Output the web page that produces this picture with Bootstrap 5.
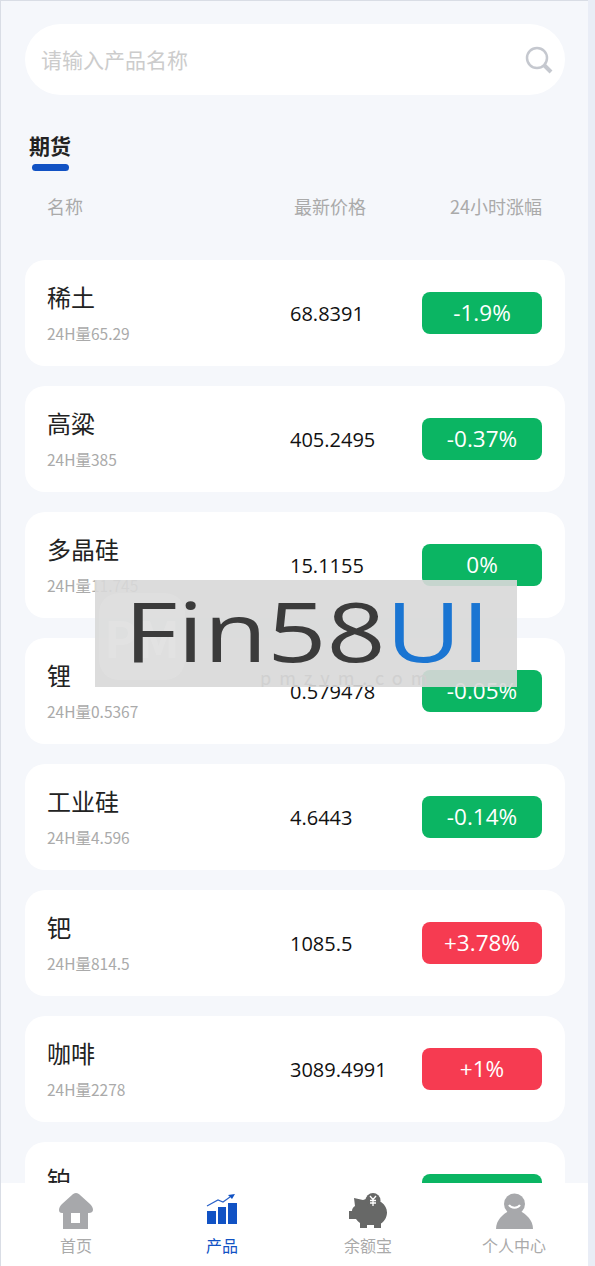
<!DOCTYPE html>
<html lang="zh">
<head>
  <meta charset="UTF-8">
  <meta name="viewport" content="width=device-width, initial-scale=1.0">
  <title>产品</title>
  <link href="https://cdn.jsdelivr.net/npm/bootstrap@5.3.0/dist/css/bootstrap.min.css" rel="stylesheet">
  <style>
    html, body { height: 1266px; overflow: hidden; }
    body { background: #e9edf6; font-family: "Noto Sans CJK SC", "Noto Sans", sans-serif; }
    .phone { width: 588px; height: 1266px; border-left: 1px solid #d9dde5; border-top: 1px solid #d9dde5; background: #f5f7fb; padding: 23px 23px 0 24px; overflow: hidden; }
    .search-box { height: 71px; border-radius: 36px; background: #fff; padding: 0 12px 0 16px; color: #ccc; font-size: 21px; }
    .tab-title { margin: 36px 0 0 4px; width: 42px; font-size: 21px; font-weight: 700; line-height: 28px; color: #222; }
    .tab-bar { width: 37px; height: 7px; margin: 5px 0 0 7px; border-radius: 4px; background: #1152c4; }
    .head-row { height: 42px; margin-top: 14px; padding: 0 23px 0 22px; color: #aaa; font-size: 18px; }
    .goods { height: 106px; margin-top: 20px; border-radius: 20px; background: #fff; padding: 0 23px 0 22px; }
    .head-row + .goods { margin-top: 33px; }
    .cell-name { width: 243px; padding-bottom: 4px; }
    .cell-price { flex: 1; padding-top: 2px; font-family: "Open Sans", "Liberation Sans", sans-serif; font-size: 20px; color: #111; }
    .goods-name { font-size: 24px; line-height: 36px; color: #222; }
    .goods-vol { min-height: 22px; font-size: 15.5px; line-height: 22px; color: #aaa; margin-top: 7px; }
    .change { width: 120px; height: 42px; line-height: 42px; border-radius: 8px; text-align: center; color: #fff; font-family: "Open Sans", sans-serif; font-size: 22.5px; }
    .fall { background: #0bb563; }
    .rise { background: #f63b51; }
    .tabbar { position: absolute; left: 1px; bottom: 0; width: 587px; height: 83px; background: #fff; padding: 10px 0 0 2px; }
    .tab-item { width: 146px; font-size: 16px; line-height: 22px; color: #aaa; }
    .tab-item svg { display: block; margin: 0 auto 5px; }
    .tab-on { color: #1152c4; }
    .stamp { position: absolute; left: 95px; top: 580px; width: 422px; height: 107px; background: rgba(216,216,216,.91); overflow: hidden; }
    .stamp-logo { position: absolute; left: 4px; top: 13px; width: 86px; height: 87px; border-radius: 20px; background: rgba(255,255,255,.1); color: rgba(255,255,255,.12); font-weight: 700; font-size: 50px; line-height: 87px; text-align: center; }
    .stamp-url { position: absolute; left: 165px; top: 85px; font-size: 18px; line-height: 24px; letter-spacing: 8px; color: #d0d0d0; }
    .stamp-word { position: absolute; left: 29px; top: -2px; font-family: "Open Sans", sans-serif; font-weight: 500; font-size: 82px; line-height: 105px; color: #3b3b3b; white-space: nowrap; transform: scaleX(1.264); transform-origin: left center; }
    .stamp-word b { font-weight: 500; color: #1a75d2; }
  </style>
</head>
<body>
  <div class="phone">
    <div class="search-box d-flex align-items-center justify-content-between">
      <span>请输入产品名称</span>
      <svg width="28" height="28" viewBox="0 0 28 28" fill="none" stroke="#c5c8cf" stroke-width="2.500"><circle cx="12" cy="12" r="10"/><path d="M19 19l7 7" stroke-width="4"/></svg>
    </div>
    <div class="tab-title">期货</div>
    <div class="tab-bar"></div>
    <div class="head-row d-flex align-items-center">
      <div class="cell-name pb-0">名称</div>
      <div class="flex-grow-1 ps-1">最新价格</div>
      <div>24小时涨幅</div>
    </div>

    <div class="goods d-flex align-items-center">
      <div class="cell-name"><div class="goods-name">稀土</div><div class="goods-vol">24H量65.29</div></div>
      <div class="cell-price">68.8391</div><div class="change fall">-1.9%</div>
    </div>
    <div class="goods d-flex align-items-center">
      <div class="cell-name"><div class="goods-name">高粱</div><div class="goods-vol">24H量385</div></div>
      <div class="cell-price">405.2495</div><div class="change fall">-0.37%</div>
    </div>
    <div class="goods d-flex align-items-center">
      <div class="cell-name"><div class="goods-name">多晶硅</div><div class="goods-vol">24H量11.745</div></div>
      <div class="cell-price">15.1155</div><div class="change fall">0%</div>
    </div>
    <div class="goods d-flex align-items-center">
      <div class="cell-name"><div class="goods-name">锂</div><div class="goods-vol">24H量0.5367</div></div>
      <div class="cell-price">0.579478</div><div class="change fall">-0.05%</div>
    </div>
    <div class="goods d-flex align-items-center">
      <div class="cell-name"><div class="goods-name">工业硅</div><div class="goods-vol">24H量4.596</div></div>
      <div class="cell-price">4.6443</div><div class="change fall">-0.14%</div>
    </div>
    <div class="goods d-flex align-items-center">
      <div class="cell-name"><div class="goods-name">钯</div><div class="goods-vol">24H量814.5</div></div>
      <div class="cell-price">1085.5</div><div class="change rise">+3.78%</div>
    </div>
    <div class="goods d-flex align-items-center">
      <div class="cell-name"><div class="goods-name">咖啡</div><div class="goods-vol">24H量2278</div></div>
      <div class="cell-price">3089.4991</div><div class="change rise">+1%</div>
    </div>
    <div class="goods d-flex align-items-center">
      <div class="cell-name"><div class="goods-name">铂</div><div class="goods-vol"></div></div>
      <div class="cell-price"></div><div class="change fall"></div>
    </div>
  </div>

  <div class="tabbar d-flex">
    <div class="tab-item text-center">
      <svg width="34" height="36" viewBox="0 0 34 36" fill="#a7a8ab"><path fill-rule="evenodd" d="M17 0c2 0 3 1 4 2l10 9c2 2 3 4 3 6s-2 3-4 3h-1v16H4V20H3c-2 0-3-1-3-3s1-4 3-6L13 2c1-1 2-2 4-2zM12 20v10h9V20z"/></svg>
      首页
    </div>
    <div class="tab-item tab-on text-center">
      <svg width="36" height="36" viewBox="0 0 36 36" fill="#1152c4"><rect x="3" y="18" width="9" height="13"/><rect x="14" y="14" width="8" height="17"/><rect x="24" y="10" width="9" height="21"/><path d="M3 13l11-6 5 2 7-5" fill="none" stroke="#2a62c8" stroke-width="1.200"/><path d="M24 2l7-1-3 5z"/></svg>
      产品
    </div>
    <div class="tab-item text-center">
      <svg width="38" height="36" viewBox="0 0 38 36" fill="#676867"><path d="M5 5l9 2c2-1 4-1.500 6-1.500 10 0 18 6 18 14 0 5-3 9-6 11v4.500h-7v-3h-7v3h-7v-5c-2-1-3-3-4-4H0v-8h3c0-2 1-4 3-5z"/><circle cx="24" cy="7.500" r="7.500"/><path d="M21 3l3 3.500 3-3.500M24 6.500V13M21 7.500h6M21 10h6" fill="none" stroke="#fff" stroke-width="1.300"/></svg>
      余额宝
    </div>
    <div class="tab-item text-center">
      <svg width="37" height="36" viewBox="0 0 37 36" fill="#a7a8ab"><circle cx="18.500" cy="11" r="10.500"/><path d="M0 36c0-9 7-15 13-18h11c6 3 13 9 13 18z"/><path d="M13 12c2 3.500 9 3.500 11 0" fill="none" stroke="#fff" stroke-width="2"/></svg>
      个人中心
    </div>
  </div>

  <div class="stamp">
    <div class="stamp-logo">PM</div>
    <div class="stamp-url">pmzym.com</div>
    <div class="stamp-word">Fin58<b>UI</b></div>
  </div>
  <script src="https://cdn.jsdelivr.net/npm/bootstrap@5.3.0/dist/js/bootstrap.bundle.min.js"></script>
</body>
</html>
